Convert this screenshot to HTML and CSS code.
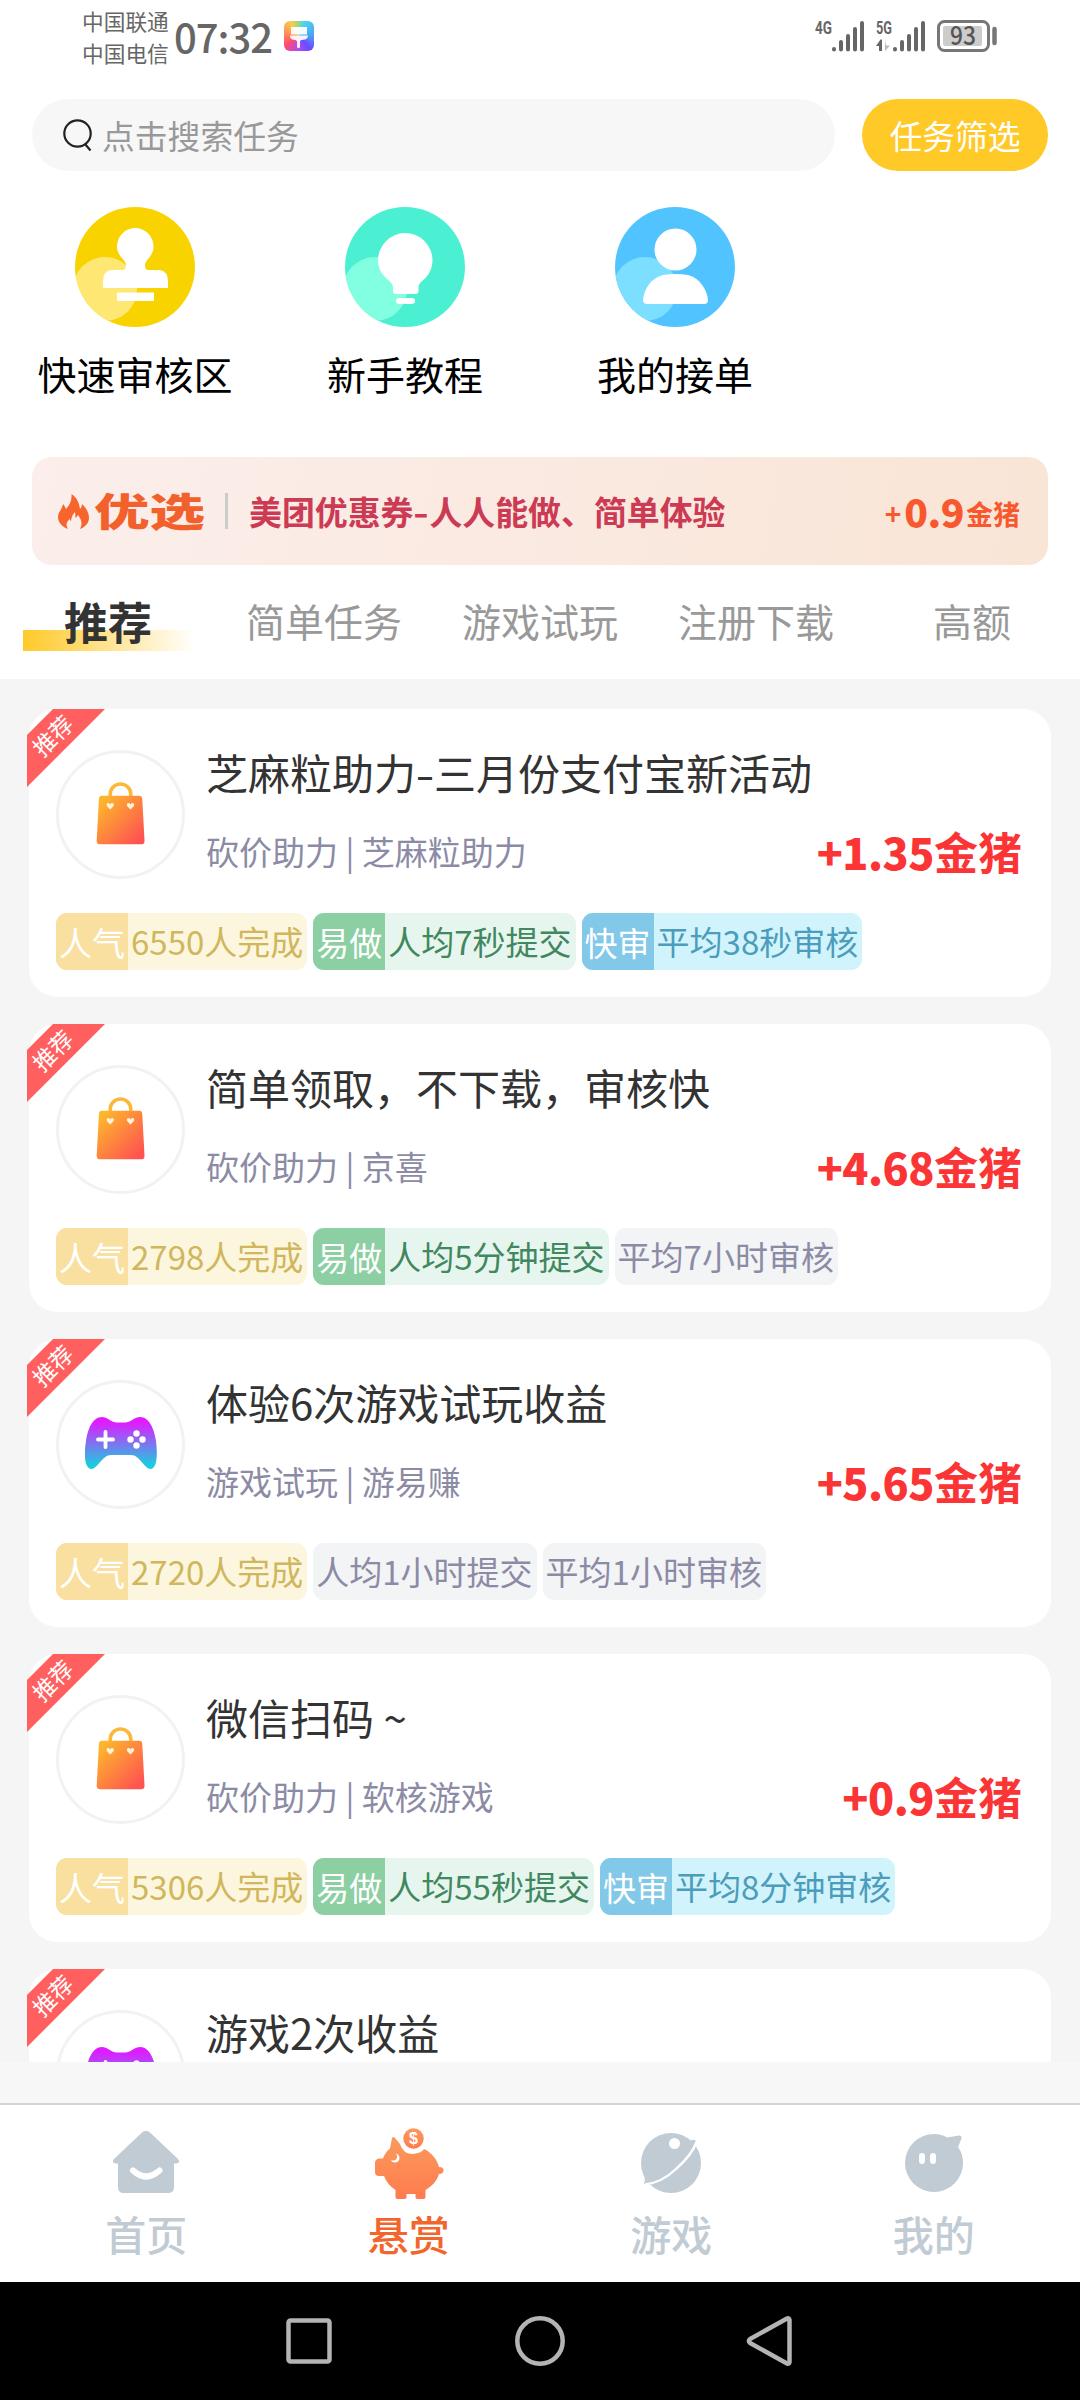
FILE: index.html
```
<!DOCTYPE html>
<html lang="zh-CN">
<head>
<meta charset="utf-8">
<title>悬赏</title>
<link rel="stylesheet" href="styles.css">
</head>
<body>
<svg class="defs" width="0" height="0" aria-hidden="true">
  <defs>
    <linearGradient id="bagFill" x1="0" y1="0" x2="1" y2="1"><stop offset="0.1" stop-color="#fdb62c"/><stop offset="0.9" stop-color="#ff5350"/></linearGradient>
    <linearGradient id="padFill" x1="0" y1="0" x2="0" y2="1"><stop offset="0.1" stop-color="#e01cff"/><stop offset="0.92" stop-color="#1ccbe0"/></linearGradient>
    <linearGradient id="pigFill" x1="0" y1="0" x2="0" y2="1"><stop offset="0" stop-color="#fb9a5c"/><stop offset="1" stop-color="#ff7b4f"/></linearGradient>
    <symbol id="bag" viewBox="0 0 50 64">
      <path d="M14.500 16V13a10.500 10.500 0 0 1 21 0v3" fill="none" stroke="#fbb837" stroke-width="3.600"/>
      <path d="M6 14.500h38q3 0 3.200 3L49.500 60q.2 4-3.500 4H4.500Q.500 64 .7 60L3 17.500q.2-3 3-3z" fill="url(#bagFill)"/>
      <path d="M14.500 28.500l-3.300-3.400q-1.200-2.600 1-3.200 1.500 0 2.300 1.500.8-1.500 2.400-1.500 2.100.6.9 3.200zM35.200 28.500l-3.300-3.400q-1.200-2.600 1-3.200 1.500 0 2.300 1.500.8-1.500 2.400-1.500 2.100.6.9 3.200z" fill="#fff3dc"/>
    </symbol>
    <symbol id="pad" viewBox="0 0 72 52">
      <path d="M17 0C22 0 26 5 31 5.500h10C46 5 50 0 55 0c9 0 14 11 16 24 1.500 12 1.500 27-5 28-7 0-11-14-20-14H26c-9 0-13 14-20 14-7-1-7-16-5-28C3 11 8 0 17 0z" fill="url(#padFill)"/>
      <path d="M13 22.500h15M20.500 15v15" stroke="#fff" stroke-width="3.800" stroke-linecap="round"/>
      <g fill="#fff"><circle cx="51.500" cy="16.500" r="3.200"/><circle cx="51.500" cy="28.500" r="3.200"/><circle cx="45.500" cy="22.500" r="3.200"/><circle cx="57.500" cy="22.500" r="3.200"/></g>
    </symbol>
  </defs>
</svg>

<header class="status">
  <div class="carriers"><span>中国联通</span><span>中国电信</span></div>
  <div class="clock">07:32</div>
  <div class="theme-app">
    <svg viewBox="0 0 30 30" width="30" height="30"><path d="M7 6h16v7.500H7zM6 14.500h18q0 4-5 4.300-3 .2-3 2V26q-1.500 2.500-3 0v-5q0-2-3-2.200Q6 18.500 6 14.500z" fill="#fff" opacity=".93"/></svg>
  </div>
  <svg class="signals" viewBox="0 0 186 36" width="186" height="36">
    <g class="net"><text x="2" y="18" textLength="17" lengthAdjust="spacingAndGlyphs">4G</text><text x="63" y="18" textLength="16" lengthAdjust="spacingAndGlyphs">5G</text></g>
    <path d="M21 33v.5M28 26v7.500M35 20v13.500M42 13v20.500M49 7v26.500M82 33v.5M89 26v7.500M96 20v13.500M103 13v20.500M110 7v26.500" stroke="#666" stroke-width="4" stroke-linecap="round"/>
    <path d="M63 30l4.500-6.500h1.500V35h-3v-5z" fill="#666"/><path d="M72 24v11l5-5.500h-4z" fill="#bbb"/>
    <rect x="125.500" y="5.500" width="50" height="29" rx="6" fill="none" stroke="#777" stroke-width="3"/>
    <rect x="130" y="10" width="39" height="20" rx="2" fill="#ccc"/>
    <text class="battery" x="137" y="28.500" textLength="26" lengthAdjust="spacingAndGlyphs">93</text>
    <path d="M181.500 13v14" stroke="#777" stroke-width="4.500" stroke-linecap="round"/>
  </svg>
</header>

<div class="search-row">
  <div class="search">
    <svg viewBox="0 0 30 34" width="30" height="34" fill="none" stroke="#222" stroke-width="2.200"><circle cx="15.500" cy="15.500" r="13.200"/><path d="M23 26l5.500 6.500"/></svg>
    <span>点击搜索任务</span>
  </div>
  <button class="filter">任务筛选</button>
</div>

<nav class="shortcuts">
  <a class="shortcut">
    <svg viewBox="0 0 120 120" width="120" height="120"><clipPath id="disc"><circle cx="60" cy="60" r="60"/></clipPath><circle cx="60" cy="60" r="60" fill="#f9d300"/><circle cx="30" cy="82" r="32" fill="#ffe774" clip-path="url(#disc)"/><path d="M60 21a18.500 18.500 0 0 1 18.500 19c0 9-8.500 13-8.500 18 0 3 1 5 3 5h12q8 1 8 12v6H28v-6q0-11 8-12h12q3 0 3-5c0-5-9-9-9-18a18.500 18.500 0 0 1 18-19zM42 85.500h37V94H42z" fill="#fff"/></svg>
    <span>快速审核区</span>
  </a>
  <a class="shortcut">
    <svg viewBox="0 0 120 120" width="120" height="120"><circle cx="60" cy="60" r="60" fill="#4befd1"/><circle cx="30" cy="82" r="32" fill="#82ffe1" clip-path="url(#disc)"/><path d="M60 26a27.500 27.500 0 0 1 27.500 27.500c0 11-7 18-12 22q-2 2-2 5V84q0 3-3 3H51q-3 0-3-3v-4q0-3-3-5.500c-6-5-12-11-12-21A27.500 27.500 0 0 1 60 26z" fill="#fff"/><rect x="51" y="91" width="19" height="6" rx="3" fill="#fff"/></svg>
    <span>新手教程</span>
  </a>
  <a class="shortcut">
    <svg viewBox="0 0 120 120" width="120" height="120"><circle cx="60" cy="60" r="60" fill="#51c4ff"/><circle cx="30" cy="82" r="32" fill="#7cdfff" clip-path="url(#disc)"/><circle cx="60.500" cy="42.500" r="21" fill="#fff"/><path d="M48 68Q60 66 73 68c12 3 19 15 20 25q0 4-4 4H32q-4 0-4-4c1-11 8-22 20-25z" fill="#fff"/></svg>
    <span>我的接单</span>
  </a>
</nav>

<section class="promo">
  <svg class="flame" viewBox="0 0 31 35" width="31" height="35"><path d="M13.500 0C20 5 21 9 22 15q2-2 2-5c5 5 7 9 7 14 0 5-4 9-9 11 3-6 1-10-2-14q-1 2-2.500 3 0-3-.5-6c-3 3-3.500 6-4 9q-1-.5-1.500-2c-3 3-4 6-1.500 10C5 33 0 29 0 23c0-5 4-7 5-13q2 2 3 5c4-4 6-9 5.500-15z" fill="#f8652c"/></svg>
  <b class="promo-logo">优选</b>
  <i class="promo-rule"></i>
  <span class="promo-title">美团优惠券<em>-</em>人人能做、简单体验</span>
  <span class="promo-plus">+</span><b class="promo-num">0.9</b><span class="promo-unit">金猪</span>
</section>

<nav class="tabs">
  <a class="tab tab-on"><span>推荐</span></a><a class="tab">简单任务</a><a class="tab">游戏试玩</a><a class="tab">注册下载</a><a class="tab">高额</a>
</nav>

<main class="list">
  <article class="card">
    <div class="ribbon"><span>推荐</span></div>
    <div class="head">
      <div class="avatar"><svg class="bag"><use href="#bag"/></svg></div>
      <div class="info"><h2>芝麻粒助力<em>-</em>三月份支付宝新活动</h2><div class="meta"><span>砍价助力 | 芝麻粒助力</span><strong><b>+1.35</b>金猪</strong></div></div>
    </div>
    <div class="tags">
      <span class="tag gold"><b>人气</b><i>6550人完成</i></span><span class="tag green"><b>易做</b><i>人均7秒提交</i></span><span class="tag blue"><b>快审</b><i>平均38秒审核</i></span>
    </div>
  </article>
  <article class="card">
    <div class="ribbon"><span>推荐</span></div>
    <div class="head">
      <div class="avatar"><svg class="bag"><use href="#bag"/></svg></div>
      <div class="info"><h2>简单领取，不下载，审核快</h2><div class="meta"><span>砍价助力 | 京喜</span><strong><b>+4.68</b>金猪</strong></div></div>
    </div>
    <div class="tags">
      <span class="tag gold"><b>人气</b><i>2798人完成</i></span><span class="tag green"><b>易做</b><i>人均5分钟提交</i></span><span class="tag grey"><i>平均7小时审核</i></span>
    </div>
  </article>
  <article class="card">
    <div class="ribbon"><span>推荐</span></div>
    <div class="head">
      <div class="avatar"><svg class="pad"><use href="#pad"/></svg></div>
      <div class="info"><h2>体验6次游戏试玩收益</h2><div class="meta"><span>游戏试玩 | 游易赚</span><strong><b>+5.65</b>金猪</strong></div></div>
    </div>
    <div class="tags">
      <span class="tag gold"><b>人气</b><i>2720人完成</i></span><span class="tag grey"><i>人均1小时提交</i></span><span class="tag grey"><i>平均1小时审核</i></span>
    </div>
  </article>
  <article class="card">
    <div class="ribbon"><span>推荐</span></div>
    <div class="head">
      <div class="avatar"><svg class="bag"><use href="#bag"/></svg></div>
      <div class="info"><h2>微信扫码 ~</h2><div class="meta"><span>砍价助力 | 软核游戏</span><strong><b>+0.9</b>金猪</strong></div></div>
    </div>
    <div class="tags">
      <span class="tag gold"><b>人气</b><i>5306人完成</i></span><span class="tag green"><b>易做</b><i>人均55秒提交</i></span><span class="tag blue"><b>快审</b><i>平均8分钟审核</i></span>
    </div>
  </article>
  <article class="card">
    <div class="ribbon"><span>推荐</span></div>
    <div class="head">
      <div class="avatar"><svg class="pad"><use href="#pad"/></svg></div>
      <div class="info"><h2>游戏2次收益</h2></div>
    </div>
  </article>
</main>

<footer class="bottom">
  <a class="item">
    <svg viewBox="0 0 80 72" width="80" height="72"><path d="M36 5.500q4-3.500 8 0L72 32q3 4-2 4.500h-2V60q0 6-6 6H18q-6 0-6-6V36.500h-2Q5 36 8 32z" fill="#c1cbd3"/><path d="M27 43.500q13 12 26.500 0" fill="none" stroke="#fff" stroke-width="6" stroke-linecap="round"/></svg>
    <span>首页</span>
  </a>
  <a class="item item-on">
    <svg viewBox="0 0 80 72" width="80" height="72"><g fill="url(#pigFill)"><circle cx="44.500" cy="11.500" r="10.200"/><path d="M23 11q1-2 3 0l5 6Q34 27 44 27q9-1 11-5c7 3 13 10 15 18q5 0 4.500 4-.5 3-4.500 3c-2 7-7 12-13.500 16v7q0 2-2 2h-6q-2 0-2-2v-3h-9v3q0 2-2 2h-7q-2 0-2-2v-7q-8-5-11.500-14H10q-4 0-4-4v-9q0-4 4-4.500h4q2-6 7-10z"/></g><circle cx="26" cy="31" r="4.500" fill="#fff"/><circle cx="24" cy="29.500" r="4" fill="#fb945b"/><text class="coin" x="44.500" y="17">$</text></svg>
    <span>悬赏</span>
  </a>
  <a class="item">
    <svg viewBox="0 0 80 72" width="80" height="72"><circle cx="40" cy="36" r="30" fill="#c1cbd3"/><path d="M12 46q3 5 1 11 18 3 34-12Q65 29 65.500 15q-1-3-5-2z" fill="#c1cbd3"/><path d="M14 57.500q17-2 31-15.500 16-14 21-28" fill="none" stroke="#fff" stroke-width="2.400"/><circle cx="43.500" cy="16.500" r="5.500" fill="#fff"/></svg>
    <span>游戏</span>
  </a>
  <a class="item">
    <svg viewBox="0 0 80 72" width="80" height="72"><path d="M40 7q8 0 13 3.500L65 8.500q3 0 2.500 3L64 20Q69 27 69 36a29 29 0 1 1-29-29z" fill="#c1cbd3"/><rect x="25" y="26" width="6" height="11" rx="3" fill="#fff"/><rect x="36" y="26" width="6" height="11" rx="3" fill="#fff"/></svg>
    <span>我的</span>
  </a>
</footer>

<div class="sysnav">
  <svg viewBox="0 0 60 60" width="60" height="60"><rect x="9.500" y="9.500" width="41" height="41" rx="2"/></svg>
  <svg viewBox="0 0 60 60" width="60" height="60"><circle cx="30" cy="30" r="22.700"/></svg>
  <svg viewBox="0 0 60 60" width="60" height="60"><path d="M46 7.500q2-1 2.500 1.500v42q-.5 2.500-2.500 1.500L9 32q-2-2 0-4z"/></svg>
</div>
</body>
</html>
```
FILE: styles.css
```
* { box-sizing: border-box; }
body {
  margin: 0;
  width: 1080px;
  height: 2400px;
  overflow: hidden;
  display: flex;
  flex-direction: column;
  background: #fff;
  color: #333;
  font-family: "Noto Sans CJK SC", sans-serif;
}
.defs { position: absolute; }
svg { display: block; flex: none; }
h2, b, i, em, strong { margin: 0; font-style: normal; }

/* status bar */
.status { display: flex; height: 99px; padding: 0 81px 0 82px; color: #666; }
.carriers { display: flex; flex-direction: column; padding-top: 5px; width: 92px; font-size: 21.700px; line-height: 32px; }
.clock { padding-top: 7px; width: 110px; font-size: 40px; font-weight: 500; line-height: 58px; letter-spacing: -1px; }
.theme-app {
  width: 30px; height: 30px; margin-top: 21px; border-radius: 6px; overflow: hidden;
  background: conic-gradient(from 20deg, #4fd4f0, #4aa0f5 70deg, #6a4bff 120deg, #b34bf0 165deg, #ff4a6e 215deg, #ff8a5a 260deg, #f4cf4a 310deg, #7ad8a0 345deg, #4fd4f0);
}
.signals { margin: 16px 0 0 auto; }
.net { font: 700 18px "Roboto", sans-serif; fill: #666; }
.battery { font: 500 25px "Noto Sans CJK SC", sans-serif; fill: #555; }

/* search */
.search-row { display: flex; gap: 27px; height: 72px; padding: 0 32px; }
.search { display: flex; flex: 1; align-items: center; gap: 10px; padding-left: 30px; border-radius: 36px; background: #f7f7f7; color: #999; font-size: 32.800px; }
.search span { line-height: 48px; }
.filter { width: 186px; padding: 0; border: 0; border-radius: 36px; background: #ffc928; color: #fff; font: 400 32.800px/70px "Noto Sans CJK SC", sans-serif; }

/* shortcuts */
.shortcuts { display: flex; height: 286px; padding-top: 36px; }
.shortcut { display: flex; flex-direction: column; align-items: center; width: 270px; gap: 16px; color: #000; font-size: 39px; line-height: 60px; }

/* promo banner */
.promo { display: flex; align-items: center; height: 108px; margin: 0 32px; padding: 0 28px 0 26px; border-radius: 20px; background: linear-gradient(100deg, #fbeeeb, #f9e5d6); }
.promo-logo { width: 111px; margin: 0 20px 4px 5px; color: #f2602c; font-size: 39px; font-weight: 900; line-height: 60px; transform: scaleX(1.420); transform-origin: left; white-space: nowrap; }
.promo-rule { width: 3px; height: 36px; background: #ccc; }
.promo-title { flex: 1; margin-left: 21px; color: #cc3a53; font-size: 32.900px; font-weight: 700; line-height: 50px; }
.promo-title em { display: inline-block; width: 16px; transform: scaleX(1.300); text-align: center; }
.promo-plus { color: #f9582f; font-size: 28px; font-weight: 700; line-height: 60px; padding-top: 4px; }
.promo-num { margin: 0 2px 0 3px; color: #f9582f; font-size: 39px; font-weight: 900; line-height: 60px; letter-spacing: -.5px; }
.promo-unit { padding-top: 5px; color: #f9582f; font-size: 27px; font-weight: 700; line-height: 60px; }

/* tabs */
.tabs { display: flex; height: 114px; }
.tab { width: 216px; color: #999; font-size: 39px; line-height: 111px; text-align: center; }
.tab-on { color: #333; font-size: 44px; font-weight: 700; line-height: 112px; background: linear-gradient(90deg, #ffc928, #fff) 23px 65px / 172px 21px no-repeat; }

/* task list */
.list { display: flex; flex-direction: column; gap: 27px; height: 1383px; padding: 30px 29px 0; overflow: hidden; background: #f5f5f5; }
.card { position: relative; flex: none; height: 288px; padding: 41px 29px 0 27px; border-radius: 28px; background: #fff; }
.ribbon { position: absolute; left: -2px; top: 0; width: 78px; height: 78px; background: #ff5f5f; clip-path: polygon(26px 0, 100% 0, 0 100%, 0 26px); }
.ribbon span { position: absolute; left: -1px; top: 9px; width: 52px; color: #fff; font-size: 23px; line-height: 34px; text-align: center; transform: rotate(-45deg); }
.head { display: flex; height: 163px; gap: 21px; }
.avatar { display: flex; align-items: center; justify-content: center; flex: none; width: 129px; height: 129px; padding-bottom: 3px; border: 3px solid #f2f2f2; border-radius: 50%; }
.bag { width: 49px; height: 64px; }
.pad { width: 72px; height: 52px; }
.info { flex: 1; }
h2 { font-size: 42px; font-weight: 400; line-height: 60px; margin-top: -8px; }
h2 em { display: inline-block; width: 18px; transform: scaleX(1.300); text-align: center; }
.meta { display: flex; justify-content: space-between; align-items: center; margin-top: 19px; color: #8c8ba5; font-size: 33px; line-height: 60px; }
.meta strong { color: #fb3535; font-size: 44px; font-weight: 700; }
.meta strong b { font-size: 43px; font-weight: 900; letter-spacing: -.5px; }
.tags { display: flex; gap: 6px; font-size: 33px; line-height: 57px; }
.tag { display: flex; height: 57px; border-radius: 11px; overflow: hidden; }
.tag b { width: 72px; padding-left: 3px; color: #fff; font-weight: 400; line-height: 58px; }
.tag i { padding: 0 4px 0 3px; }
.gold { background: #fdf6de; color: #d0b65c; }
.gold b { background: #f9dfa0; }
.green { background: #e6f6ee; color: #41875f; }
.green b { background: #8bcfa2; }
.blue { background: #d1f3fc; color: #4b9dbb; }
.blue b { background: #82c8e8; }
.grey { background: #f3f4f6; color: #8c8ba5; }

/* bottom tab bar */
.bottom { display: flex; height: 220px; padding: 65px 15px 0; background: linear-gradient(#f7f7f7 41px, #d4d4d4 41px, #d4d4d4 43px, #fff 43px); }
.item { display: flex; flex-direction: column; align-items: center; flex: 1; gap: 6px; color: #c1cbd3; font-size: 41px; font-weight: 500; line-height: 56px; }
.item-on { color: #f2662d; }
.coin { font: 700 16px "Liberation Sans", sans-serif; fill: #fff; text-anchor: middle; }

/* system navigation */
.sysnav { display: flex; justify-content: center; gap: 171px; height: 118px; padding-top: 29px; background: #000; }
.sysnav svg { fill: none; stroke: #b4b4b4; stroke-width: 4.500; }
```
